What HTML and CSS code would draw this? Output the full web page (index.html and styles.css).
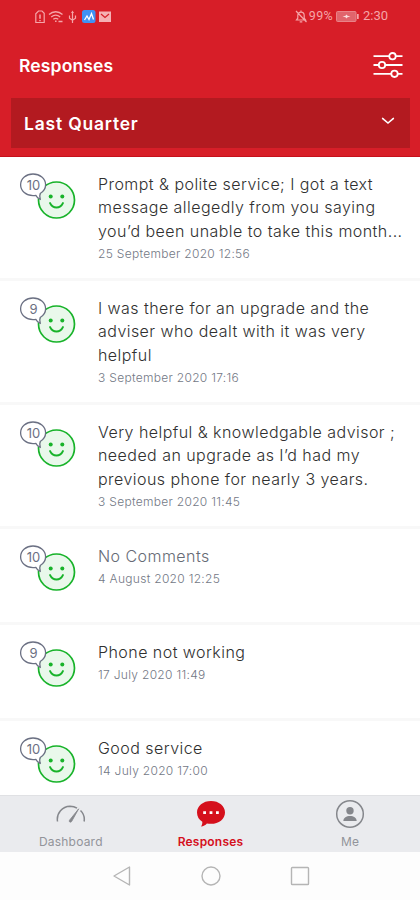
FILE: index.html
```
<!DOCTYPE html>
<html lang="en">
<head>
	<meta charset="utf-8">
	<meta name="viewport" content="width=device-width, initial-scale=1">
	<title>Responses</title>
	<link rel="stylesheet" href="styles.css">
</head>
<body>
	<!-- Shared face icon -->
	<svg class="defs" width="0" height="0">
		<symbol id="face" viewBox="0 0 60 52">
			<circle cx="38.5" cy="31" r="18" fill="#e9f8eb" stroke="#18b32a" stroke-width="1.7"/>
			<circle cx="32.7" cy="27.500" r="2" fill="#18b32a"/>
			<circle cx="44.3" cy="27.500" r="2" fill="#18b32a"/>
			<path d="M32 34c2.800 6 10.200 6 13 0" fill="none" stroke="#18b32a" stroke-width="1.8" stroke-linecap="round"/>
			<path d="M22.300 30.500c-1.800-.8-3.500-2.300-4.300-4.100-1 .2-2 .3-3 .3C8.200 26.700 2.600 21.900 2.600 15.800S8.200 5 15 5s12.600 4.700 12.600 10.800c0 3.600-2.200 6.800-5.400 8.700-.7 2-.6 4 .1 6z" fill="#fff" stroke="#6b7083" stroke-width="1.300" stroke-linejoin="round"/>
		</symbol>
	</svg>
	<header class="header">
		<div class="status">
			<div class="status-left">
				<svg width="76" height="14" viewBox="0 0 76 14" fill="none" stroke="#f5a5a9">
					<path d="M.8 12.500V3.800L3.500 1H7l2.200 2.300v9.200z" stroke-width="1.200"/>
					<path d="M5 4.500v4.300M5 10v1.300" stroke-width="1.500"/>
					<path d="M14 4.500c4-3.700 9.500-3.700 13.500 0M16.200 7c3-2.500 6-2.500 9 0M18.300 9.300c1.700-1.300 3.300-1.300 5 0" stroke-width="1.300"/>
					<path d="M20.800 12v-1.500M23.500 11.500h4" stroke-width="1.500"/>
					<path d="M37.500 13V2M34.500 5.500v2.700l3 2M40.500 5.500v2.700l-3 2" stroke-width="1.200"/>
					<path d="M36 3l1.500-2.500L39 3z" fill="#f5a5a9" stroke="none"/>
					<rect x="47" y="0" width="13.500" height="13" rx="2.500" fill="#3f92f5" stroke="none"/>
					<path d="M49.500 10l2.500-4 2 3.500 2.500-6 2 6" stroke="#fff" stroke-width="1.300"/>
					<rect x="64" y="1.500" width="12" height="10.500" fill="#f5b0b4" stroke="none"/>
					<path d="M66 4l4 3.500L74 4" stroke="#d71e28" stroke-width="1.200"/>
				</svg>
			</div>
			<div class="status-right">
				<svg width="12" height="13" viewBox="0 0 12 13" fill="none" stroke="#f5a5a9" stroke-width="1.200">
					<path d="M1.500 10h9L9.200 8.200V5.500C9.200 3.500 8 2.200 6 2.200S2.800 3.500 2.800 5.500v2.700zM4.700 11.800h2.600M6 .5v1.700M1 1l10.500 11"/>
				</svg>
				<span class="percent">99%</span>
				<svg width="23" height="11" viewBox="0 0 23 11">
					<rect x=".5" y=".5" width="19.500" height="10" rx="1" fill="#e1646c" stroke="#e98388"/>
					<rect x="21" y="3" width="1.700" height="5" fill="#f5a5a9"/>
					<path d="M6.500 5.500l3-.8 1-1.200 1 1.200 3 .8-3 .8-1 1.200-1-1.200z" fill="#fbdcdd"/>
				</svg>
				<span class="clock">2:30</span>
			</div>
		</div>
		<div class="title-bar">
			<h1>Responses</h1>
			<svg width="30" height="28" viewBox="0 0 30 28" fill="#d71e28" stroke="#fff" stroke-width="1.800">
				<path d="M.5 5.200h29M.5 14h29M.5 22.800h29"/>
				<circle cx="19.500" cy="5.200" r="3.200"/>
				<circle cx="9" cy="14" r="3.200"/>
				<circle cx="21.500" cy="22.800" r="3.200"/>
			</svg>
		</div>
		<div class="period">
			<span>Last Quarter</span>
			<svg width="14" height="8" viewBox="0 0 14 8" fill="none" stroke="#fff" stroke-width="1.500">
				<path d="M1 1.300q1 .3 2 1.300l4 3.400 4-3.400q1-1 2-1.300"/>
			</svg>
		</div>
	</header>

	<main class="list">
		<article class="row">
			<div class="score"><svg><use href="#face"/></svg><span>10</span></div>
			<div class="text">
				<p>Prompt &amp; polite service; I got a text<br>message allegedly from you saying<br>you’d been unable to take this month...</p>
				<time>25 September 2020 12:56</time>
			</div>
		</article>
		<article class="row">
			<div class="score"><svg><use href="#face"/></svg><span>9</span></div>
			<div class="text">
				<p>I was there for an upgrade and the<br>adviser who dealt with it was very<br>helpful</p>
				<time>3 September 2020 17:16</time>
			</div>
		</article>
		<article class="row">
			<div class="score"><svg><use href="#face"/></svg><span>10</span></div>
			<div class="text">
				<p>Very helpful &amp; knowledgable advisor ;<br>needed an upgrade as I’d had my<br>previous phone for nearly 3 years.</p>
				<time>3 September 2020 11:45</time>
			</div>
		</article>
		<article class="row short">
			<div class="score"><svg><use href="#face"/></svg><span>10</span></div>
			<div class="text">
				<p class="empty">No Comments</p>
				<time>4 August 2020 12:25</time>
			</div>
		</article>
		<article class="row short">
			<div class="score"><svg><use href="#face"/></svg><span>9</span></div>
			<div class="text">
				<p>Phone not working</p>
				<time>17 July 2020 11:49</time>
			</div>
		</article>
		<article class="row short">
			<div class="score"><svg><use href="#face"/></svg><span>10</span></div>
			<div class="text">
				<p>Good service</p>
				<time>14 July 2020 17:00</time>
			</div>
		</article>
	</main>

	<nav class="tabs">
		<div class="tab">
			<svg width="30" height="30" viewBox="0 0 30 30" fill="none" stroke="#85878c" stroke-width="1.500">
				<path d="M1.500 22.500C.2 14 6.500 7.500 14 7.300c3 0 5 .6 7 1.900M24.500 11.500c3 3 4.300 7 3.600 11"/>
				<path d="M22.700 9.800l-9.200 11.400c-1 1.500 1 2.800 2.100 1.300z" fill="#85878c" stroke-width=".8"/>
			</svg>
			<span>Dashboard</span>
		</div>
		<div class="tab active">
			<svg width="30" height="30" viewBox="0 0 30 30">
				<path d="M15 2c7.900 0 14 4.900 14 11.400s-6.100 11.400-14 11.400c-1.500 0-2.800-.1-4.100-.4-1.500 1.700-3.500 2.900-5.900 3 1-1.200 1.500-2.900 1.300-4.700C3 20.700 1 17.400 1 13.400 1 6.900 7.100 2 15 2z" fill="#d5101c"/>
				<path d="M7.200 12.300H10v2.800H7.200zM13.600 12.300h2.800v2.800h-2.800zM20 12.300h2.800v2.800H20z" fill="#fff"/>
			</svg>
			<span>Responses</span>
		</div>
		<div class="tab">
			<svg width="30" height="30" viewBox="0 0 30 30" fill="#85878c">
				<circle cx="15" cy="15" r="13.300" fill="none" stroke="#85878c" stroke-width="1.500"/>
				<circle cx="15" cy="11.700" r="3.700"/>
				<path d="M8.300 22c.3-3.500 3-5 6.700-5s6.400 1.500 6.700 5z"/>
			</svg>
			<span>Me</span>
		</div>
	</nav>

	<footer class="system">
		<svg width="20" height="22" viewBox="0 0 20 22"><path d="M17.500 2v18L2 11z"/></svg>
		<svg width="20" height="22" viewBox="0 0 20 22"><circle cx="10" cy="11" r="9"/></svg>
		<svg width="20" height="22" viewBox="0 0 20 22"><rect x="1.500" y="2.500" width="17" height="17" rx=".8"/></svg>
	</footer>
</body>
</html>
```
FILE: styles.css
```
* {
	box-sizing: border-box;
	margin: 0;
	padding: 0;
}

body {
	width: 420px;
	height: 900px;
	display: flex;
	flex-direction: column;
	overflow: hidden;
	background: #fff;
	font-family: Inter, "Liberation Sans", sans-serif;
}

svg {
	display: block;
	flex-shrink: 0;
}

.defs {
	position: absolute;
}

/* Header */
.header {
	height: 157px;
	flex-shrink: 0;
	background: #d71e28;
	border-bottom: 1px solid #c5101c;
	color: #fff;
}

.status {
	height: 32px;
	padding: 0 32px 0 35px;
	display: flex;
	justify-content: space-between;
	align-items: center;
}

.status-left {
	padding-top: 1px;
}

.status-right {
	display: flex;
	align-items: center;
	gap: 3px;
	font-family: Roboto, sans-serif;
	font-size: 12.5px;
	color: #f5a5a9;
}

.status-right span {
	line-height: 16px;
}

.percent {
	margin-left: -1px;
	letter-spacing: 0.3px;
}

.clock {
	font-size: 13px;
	padding-left: 1px;
}

.title-bar {
	height: 66px;
	padding: 0 17px 0 19px;
	display: flex;
	justify-content: space-between;
	align-items: center;
}

h1 {
	font-size: 17.5px;
	font-weight: 600;
	letter-spacing: 0.15px;
}

.period {
	height: 50px;
	margin: 0 10px 0 11px;
	padding: 0 15px 0 13px;
	display: flex;
	justify-content: space-between;
	align-items: center;
	background: #b31a20;
	font-size: 17.5px;
	font-weight: 600;
	letter-spacing: 0.8px;
}

.period svg {
	margin-bottom: 5px;
}

/* Responses */
.list {
	height: 638px;
	flex-shrink: 0;
	overflow: hidden;
}

.row {
	height: 124px;
	display: flex;
	border-bottom: 3px solid #f8f8f8;
}

.short {
	height: 96px;
}

.score {
	width: 98px;
	padding: 12px 0 0 18px;
	position: relative;
	flex-shrink: 0;
}

.score svg {
	width: 60px;
	height: 52px;
}

/* number inside the speech bubble */
.score span {
	position: absolute;
	left: 20px;
	top: 20px;
	width: 27px;
	text-align: center;
	font-size: 13px;
	line-height: 16px;
	color: #6b7083;
}

.text {
	padding-top: 16px;
	white-space: nowrap;
}

.text p {
	font-size: 16px;
	font-weight: 300;
	line-height: 23.4px;
	letter-spacing: 0.45px;
	color: #303030;
}

.text .empty {
	color: #666b75;
}

time {
	display: block;
	font-size: 12px;
	font-weight: 300;
	line-height: 22px;
	letter-spacing: 0.3px;
	color: #737885;
}

/* Bottom tabs */
.tabs {
	height: 57px;
	padding-left: 1px;
	flex-shrink: 0;
	display: flex;
	background: #eaebee;
	border-top: 1px solid #e0e1e4;
}

.tab {
	flex: 1;
	padding-top: 3px;
	display: flex;
	flex-direction: column;
	align-items: center;
	font-size: 12px;
	line-height: 16px;
	letter-spacing: 0.2px;
	color: #92949a;
}

.tab span {
	padding-top: 5px;
}

.active {
	color: #d5101c;
	font-weight: 600;
}

/* Android buttons */
.system {
	flex: 1;
	padding-left: 1px;
	display: flex;
	justify-content: center;
	align-items: center;
	gap: 69px;
	background: #fdfdfd;
}

.system svg {
	fill: none;
	stroke: #b5b5b5;
	stroke-width: 1.4;
	stroke-linejoin: round;
}
```
